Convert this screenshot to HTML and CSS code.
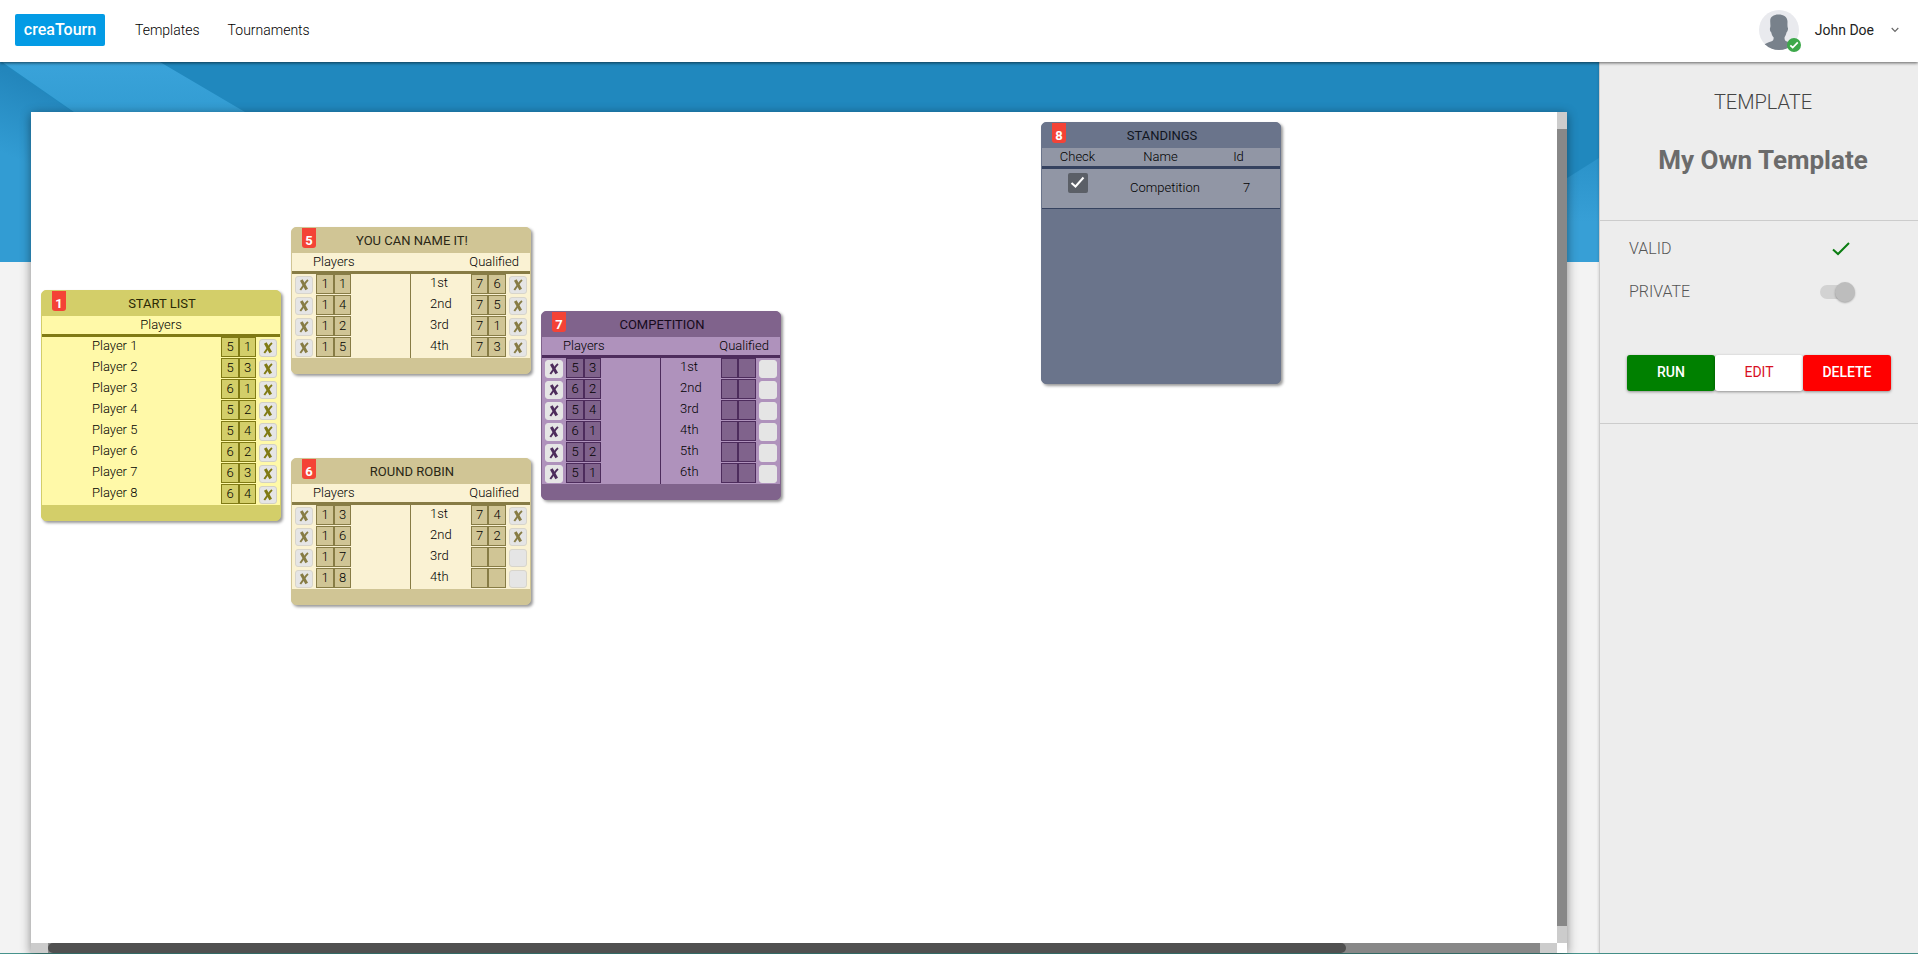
FILE: index.html
```html
<!DOCTYPE html>
<html lang="en">
<head>
<meta charset="utf-8">
<title>creaTourn</title>
<link rel="stylesheet" href="styles.css">
</head>
<body>
<header class="topbar">
  <a class="brand" href="#">creaTourn</a>
  <nav class="nav">
    <a href="#">Templates</a>
    <a href="#">Tournaments</a>
  </nav>
  <button class="user" type="button">
    <span class="avatar">
      <svg class="avatar-face" viewBox="0 0 40 40" aria-hidden="true">
        <defs><clipPath id="round"><circle cx="20" cy="20" r="20"/></clipPath></defs>
        <g clip-path="url(#round)">
          <rect width="40" height="40" fill="#e9eaee"/>
          <path fill="#78818b" d="M11.200 11C11 7 14.500 4.500 19.500 4.500S28.500 7 28.500 11.500C28.500 14 28.300 15.500 28.700 17.500C29.500 18.500 28.700 21.500 27.500 22.500C27 25 26 26 25.500 27.500C25.500 30 26 30.800 28 31.500C32 32.700 34.500 34 36 36V40H3V36C6 33.500 9 32.500 12 31.500C14 30.800 14.700 30 14.700 27.500C13.500 26 12.800 25 12.300 22.500C11 21.500 10.500 19 11.200 17.500C11.700 16 11.200 14 11.200 11Z"/>
        </g>
      </svg>
      <svg class="avatar-badge" viewBox="0 0 14 14" aria-hidden="true">
        <circle cx="7" cy="7" r="7" fill="#3da84a"/>
        <path d="M3.300 7.300L5.700 9.500L10.800 4.300" fill="none" stroke="#fff" stroke-width="1.700"/>
      </svg>
    </span>
    <span>John Doe</span>
    <svg class="chevron" viewBox="0 0 8 6" aria-hidden="true"><path d="M.7 1L4 4.500L7.300 1" fill="none" stroke="#666" stroke-width="1.100"/></svg>
  </button>
</header>

<div class="layout">
  <main class="stage">
    <div class="band" aria-hidden="true">
      <svg class="band-left" viewBox="0 0 400 200">
        <defs>
          <linearGradient id="fold" x1="30" y1="20" x2="0" y2="90" gradientUnits="userSpaceOnUse"><stop offset="0" stop-color="#2386bc"/><stop offset="1" stop-color="#329cd3"/></linearGradient>
          <linearGradient id="stripe" x1="0" y1="0" x2="0" y2="60" gradientUnits="userSpaceOnUse"><stop offset="0" stop-color="#3aa3da"/><stop offset="1" stop-color="#319bd1"/></linearGradient>
        </defs>
        <path d="M0 0L290 200H0Z" fill="url(#fold)"/>
        <path d="M0 0H160L400 141V200H290L2 0Z" fill="url(#stripe)"/>
      </svg>
      <svg class="band-right" viewBox="0 0 400 200">
        <defs><linearGradient id="rise" x1="0" y1="100" x2="0" y2="160" gradientUnits="userSpaceOnUse"><stop offset="0" stop-color="#2b93ca"/><stop offset="1" stop-color="#379fd6"/></linearGradient></defs>
        <path d="M400 96V200H235Z" fill="url(#rise)"/>
      </svg>
    </div>
    <section class="board" aria-label="Template board">
      <div class="canvas" id="canvas"></div>
      <div class="vbar"><div class="vthumb"></div></div>
      <div class="hbar"><div class="htrack"><div class="hthumb"></div></div></div>
    </section>
  </main>

  <aside class="side">
    <div class="side-head">
      <p class="kind">TEMPLATE</p>
      <h1 class="name">My Own Template</h1>
    </div>
    <div class="side-body">
      <div class="prop">
        <span>VALID</span>
        <svg class="valid" viewBox="0 0 18 14" role="img" aria-label="Yes"><path d="M1 7.500L6 12L17 1" fill="none" stroke="#0b7d12" stroke-width="2"/></svg>
      </div>
      <div class="prop">
        <label for="private">PRIVATE</label>
        <input class="switch" id="private" type="checkbox" role="switch" checked disabled>
      </div>
      <div class="actions">
        <button class="run" type="button">RUN</button>
        <button class="edit" type="button">EDIT</button>
        <button class="delete" type="button">DELETE</button>
      </div>
    </div>
  </aside>
</div>
<script src="board.js"></script>
</body>
</html>
```
FILE: styles.css
```css
* { box-sizing: border-box; }
body {
  margin: 0;
  height: 100vh;
  display: flex;
  flex-direction: column;
  overflow: hidden;
  font-family: Roboto, "Liberation Sans", sans-serif;
  font-size: 14px;
  color: #222;
  background: #f3f3f3;
}
button { font: inherit; border: 0; padding: 0; cursor: pointer; }
a { color: inherit; text-decoration: none; }

.topbar {
  position: relative;
  z-index: 2;
  height: 62px;
  flex: none;
  display: flex;
  align-items: center;
  padding: 0 19px 2px 15px;
  background: #fff;
  box-shadow: 0 1px 3px rgba(0, 0, 0, .6);
}
.brand {
  width: 90px;
  line-height: 32px;
  border-radius: 2px;
  background: #039be5;
  color: #fff;
  font-size: 16px;
  font-weight: 500;
  text-align: center;
}
.nav { display: flex; gap: 28px; margin-left: 30px; font-weight: 300; color: #000; }
.user { display: flex; align-items: center; margin-left: auto; background: none; color: #222; }
.avatar { position: relative; width: 40px; height: 40px; margin-right: 16px; }
.avatar-face { width: 40px; height: 40px; display: block; }
.avatar-badge { position: absolute; right: -2px; bottom: -2px; width: 14px; height: 14px; }
.chevron { width: 8px; height: 6px; margin-left: 17px; }

.layout { flex: 1; min-height: 0; display: flex; border-bottom: 1px solid #47938c; }
.stage {
  position: relative;
  flex: 1;
  min-width: 0;
  display: flex;
  padding: 50px 32px 0 31px;
}
.band { position: absolute; top: 0; left: 0; right: 0; height: 200px; background: #2088be; }
.band svg { position: absolute; top: 0; width: 400px; height: 200px; }
.band-left { left: 0; }
.band-right { right: 0; }

.board {
  position: relative;
  flex: 1;
  min-width: 0;
  display: grid;
  grid-template: 1fr 10px / 1fr 10px;
  background: #fff;
  box-shadow: 0 2px 10px rgba(0, 0, 0, .45);
}
.canvas { position: relative; overflow: hidden; }
.vbar { padding: 17px 0; background: #ccc; }
.vthumb { height: 100%; background: #888; }
.hbar { padding: 0 17px; background: #ccc; }
.htrack { height: 100%; background: #888; }
.hthumb { width: 87%; height: 100%; border-radius: 5px; background: #505050; }

.card {
  position: absolute;
  width: 240px;
  padding-bottom: 15px;
  border: 1px solid var(--edge);
  border-radius: 5px;
  background: var(--dark);
  box-shadow: 2px 2px 3px rgba(0, 0, 0, .4);
  font-size: 13px;
  color: #000;
  --edge: var(--dark);
}
.card h2 { margin: 0; padding-left: 2px; font-size: 13px; font-weight: 400; line-height: 25px; text-align: center; color: var(--title); }
.tag {
  position: absolute;
  left: 10px;
  top: 0;
  width: 14px;
  height: 20px;
  border-radius: 0 0 3px 3px;
  background: #f44336;
  color: #fff;
  font-weight: 700;
  line-height: 25px;
  text-align: center;
}
.grid { width: 100%; table-layout: fixed; border-collapse: separate; border-spacing: 0; background: var(--light); }
.grid th { height: 21px; padding: 0; border-bottom: 3px solid var(--line); font-weight: 300; line-height: 18px; text-align: center; }
.grid td { height: 21px; padding: 0; vertical-align: top; font-weight: 300; line-height: 18px; }
.c-button { width: 24px; }
.c-wide { width: 18px; }
.c-thin { width: 17px; }
.c-half { width: 60px; }
.c-full { width: 179px; }
.grid .h-players { padding-left: 21px; text-align: left; }
.grid .h-qualified { padding-right: 11px; text-align: right; }
.grid .gap { border-right: 1px solid var(--line); }
.grid .rank { padding-left: 19px; }
.grid .player { padding-left: 50px; }
.num { display: block; height: 20px; border: 1px solid var(--line); background: var(--dark); line-height: 18px; text-align: center; }
.x {
  display: block;
  width: 18px;
  height: 18px;
  margin: 2px 3px 0;
  border: 1px solid var(--key-edge);
  border-radius: 3px;
  background: #e5e5e5;
}
.x svg { display: block; width: 16px; height: 16px; fill: none; stroke: var(--line); }

.yellow { --dark: #d3ce69; --light: #fff9a8; --line: #807a14; --title: #2a2905; --key-edge: #d2d0c4; }
.sand { --dark: #d0c595; --light: #faf2d3; --line: #877c45; --title: #2a2715; --key-edge: #d8d5cb; }
.purple { --dark: #80638c; --light: #af92bc; --line: #4d2c5c; --title: #160a1c; --key-edge: #e5e5e5; }
.slate { --dark: #6a748b; --light: #9196a5; --line: #35425f; --title: #10141e; }

.slate .grid { margin-bottom: 159px; }
.slate td { height: 40px; border-bottom: 1px solid var(--line); line-height: 37px; }
.s-check { width: 71px; }
.s-name { width: 95px; }
.slate td + td { padding-left: 9px; text-align: center; }
.slate td + td + td { padding-left: 5px; }
.slate th:nth-child(3) { padding-right: 11px; }
.tick { position: relative; display: block; width: 20px; height: 20px; margin: 4px 0 0 26px; }
.tick input { appearance: none; display: block; width: 20px; height: 20px; margin: 0; border-radius: 2px; background: #5b5f67; }
.tick svg { position: absolute; left: 2px; top: 3px; width: 15px; height: 13px; pointer-events: none; }

.side {
  width: 319px;
  flex: none;
  border-left: 1px solid #ccc;
  background: #ededed;
  color: #555;
  box-shadow: -1px 0 2px rgba(0, 0, 0, .1);
  z-index: 1;
}
.side-head { height: 159px; padding: 28px 0 0 8px; border-bottom: 1px solid #ccc; text-align: center; }
.kind { margin: 0; font-size: 20px; line-height: 24px; font-weight: 300; color: #444; }
.name { margin: 28px 0 0; font-size: 26px; line-height: 36px; font-weight: 700; color: #6b6b6b; }
.side-body { padding: 6px 27px 32px; border-bottom: 1px solid #ccc; }
.prop { display: flex; align-items: center; justify-content: space-between; height: 43px; padding: 0 36px 0 2px; font-size: 16px; font-weight: 300; }
.valid { width: 18px; height: 14px; margin-right: 5px; }
.switch { appearance: none; position: relative; width: 35px; height: 20px; margin: 0; }
.switch::before { content: ""; position: absolute; left: 0; top: 3px; width: 32px; height: 14px; border-radius: 7px; background: #d2d2d2; }
.switch::after { content: ""; position: absolute; right: 0; top: 0; width: 20px; height: 20px; border-radius: 50%; background: #bdbdbd; box-shadow: 0 1px 2px rgba(0, 0, 0, .3); }
.actions { display: flex; margin-top: 42px; }
.actions button { flex: 1; height: 36px; padding-bottom: 2px; border-radius: 3px; font-size: 14px; box-shadow: 0 1px 3px rgba(0, 0, 0, .4); }
.actions .run { background: #008000; color: #fff; font-weight: 500; }
.actions .edit { background: #fff; color: #d8101f; }
.actions .delete { background: #f00; color: #fff; font-weight: 500; }
```
FILE: board.js
```js
const cards = [
  { id: 1, title: "START LIST", tone: "yellow", left: 10, top: 178,
    out: ["51", "53", "61", "52", "54", "62", "63", "64"] },
  { id: 5, title: "YOU CAN NAME IT!", tone: "sand", left: 260, top: 115,
    into: ["11", "14", "12", "15"], out: ["76", "75", "71", "73"] },
  { id: 6, title: "ROUND ROBIN", tone: "sand", left: 260, top: 346,
    into: ["13", "16", "17", "18"], out: ["74", "72", "", ""] },
  { id: 7, title: "COMPETITION", tone: "purple", left: 510, top: 199,
    into: ["53", "62", "54", "61", "52", "51"], out: ["", "", "", "", "", ""] },
  { id: 8, title: "STANDINGS", tone: "slate", left: 1010, top: 10,
    standings: [["Competition", 7]] }
];
const ranks = ["1st", "2nd", "3rd", "4th", "5th", "6th"];

const cross = '<svg viewBox="0 0 16 16" aria-hidden="true">' +
  '<path d="M5.300 3L10.700 12.500" stroke-width="3"/>' +
  '<path d="M12 3C9.500 5 7 9.500 4.300 13" stroke-width="2"/></svg>';

const key = on => `<td><button class="x" type="button" aria-label="Clear link">${on ? cross : ""}</button></td>`;
const nums = pair => [0, 1].map(i => `<td><span class="num">${pair[i] || ""}</span></td>`).join("");

function startTable(card) {
  const rows = card.out.map((pair, i) =>
    `<tr><td class="player">Player ${i + 1}</td>${nums(pair)}${key(pair)}</tr>`).join("");
  return `<table class="grid"><colgroup><col class="c-full"><col class="c-wide"><col class="c-thin"><col class="c-button"></colgroup>
    <thead><tr><th colspan="4">Players</th></tr></thead><tbody>${rows}</tbody></table>`;
}

function groupTable(card) {
  const rows = card.into.map((pair, i) =>
    `<tr>${key(pair)}${nums(pair)}<td class="gap"></td><td class="rank">${ranks[i]}</td>${nums(card.out[i])}${key(card.out[i])}</tr>`).join("");
  return `<table class="grid"><colgroup><col class="c-button"><col class="c-wide"><col class="c-thin"><col class="c-half"><col class="c-half"><col class="c-thin"><col class="c-wide"><col class="c-button"></colgroup>
    <thead><tr><th class="h-players" colspan="4">Players</th><th class="h-qualified" colspan="4">Qualified</th></tr></thead><tbody>${rows}</tbody></table>`;
}

function standingsTable(card) {
  const rows = card.standings.map(([name, id]) =>
    `<tr><td><label class="tick"><input type="checkbox" checked aria-label="${name}"><svg viewBox="0 0 15 13" aria-hidden="true"><path d="M1.500 7L5.500 10.500L13.500 1.500" fill="none" stroke="#fff" stroke-width="2"/></svg></label></td><td>${name}</td><td>${id}</td></tr>`).join("");
  return `<table class="grid"><colgroup><col class="s-check"><col class="s-name"><col></colgroup>
    <thead><tr><th>Check</th><th>Name</th><th>Id</th></tr></thead><tbody>${rows}</tbody></table>`;
}

document.getElementById("canvas").innerHTML = cards.map(card => {
  const table = card.standings ? standingsTable(card) : card.into ? groupTable(card) : startTable(card);
  return `<article class="card ${card.tone}" style="left:${card.left}px;top:${card.top}px"><span class="tag">${card.id}</span><h2>${card.title}</h2>${table}</article>`;
}).join("");
```
